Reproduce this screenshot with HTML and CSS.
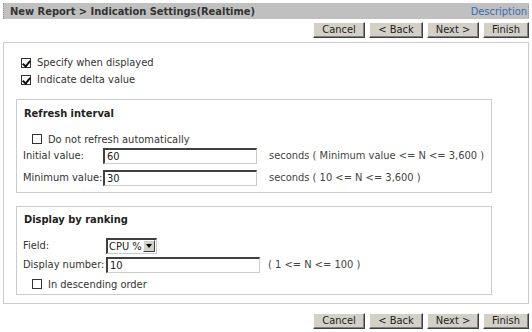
FILE: index.html
```html
<!DOCTYPE html>
<html lang="en">
<head>
  <meta charset="UTF-8">
  <title>New Report - Indication Settings</title>
  <link rel="stylesheet" href="styles.css">
</head>
<body>
  <div class="titlebar">
    <span class="title">New Report &gt; Indication Settings(Realtime)</span>
    <a class="desc-link" href="#">Description</a>
  </div>

  <div class="actions">
    <button class="btn btn-cancel">Cancel</button>
    <button class="btn btn-back">&lt; Back</button>
    <button class="btn btn-next">Next &gt;</button>
    <button class="btn btn-finish">Finish</button>
  </div>

  <div class="panel">
    <label class="check-row top-check">
      <span class="box checked"></span>Specify when displayed
    </label>
    <label class="check-row top-check">
      <span class="box checked"></span>Indicate delta value
    </label>

    <div class="group refresh">
      <div class="group-title">Refresh interval</div>
      <label class="check-row inner-check">
        <span class="box"></span>Do not refresh automatically
      </label>
      <div class="field-row">
        <span class="field-label">Initial value:</span>
        <input class="text-input" type="text" value="60">
        <span class="hint">seconds ( Minimum value &lt;= N &lt;= 3,600 )</span>
      </div>
      <div class="field-row">
        <span class="field-label">Minimum value:</span>
        <input class="text-input" type="text" value="30">
        <span class="hint">seconds ( 10 &lt;= N &lt;= 3,600 )</span>
      </div>
    </div>

    <div class="group ranking">
      <div class="group-title">Display by ranking</div>
      <div class="field-row">
        <span class="field-label">Field:</span>
        <span class="select">
          <span class="select-value">CPU %</span>
          <span class="select-arrow"></span>
        </span>
      </div>
      <div class="field-row">
        <span class="field-label">Display number:</span>
        <input class="text-input" type="text" value="10">
        <span class="hint">( 1 &lt;= N &lt;= 100 )</span>
      </div>
      <label class="check-row inner-check">
        <span class="box"></span>In descending order
      </label>
    </div>
  </div>

  <div class="actions bottom">
    <button class="btn btn-cancel">Cancel</button>
    <button class="btn btn-back">&lt; Back</button>
    <button class="btn btn-next">Next &gt;</button>
    <button class="btn btn-finish">Finish</button>
  </div>
</body>
</html>
```

FILE: styles.css
```css
* {
  margin: 0;
  padding: 0;
  box-sizing: border-box;
}

body {
  font-family: "DejaVu Sans Condensed", "DejaVu Sans", sans-serif;
  font-size: 11px;
  color: #333;
  background: #fff;
  width: 532px;
}

.titlebar {
  margin: 3px 3px 0 3px;
  height: 16px;
  background-color: #c0c0c0;
  border-left: 1px dotted #8a8ad0;
  display: flex;
  justify-content: space-between;
  align-items: center;
  padding-left: 6px;
}

.title {
  font-weight: bold;
  color: #333;
}

.desc-link {
  color: #3a6ab0;
  text-decoration: none;
  border-right: 1px dotted #8a8ad0;
  padding-right: 1px;
}

.actions {
  display: flex;
  justify-content: flex-end;
  gap: 4px;
  margin: 3px 3px 0 0;
}

.actions.bottom {
  margin-top: 9px;
}

.btn {
  height: 16px;
  font-family: inherit;
  font-size: 11px;
  line-height: 12px;
  color: #222;
  background-color: #d4d0c8;
  border: 1px solid;
  border-color: #fff #404040 #404040 #fff;
  box-shadow: inset -1px -1px 0 #808080;
}

.btn-cancel { width: 52px; }
.btn-back { width: 54px; }
.btn-next { width: 52px; }
.btn-finish { width: 46px; }

.panel {
  margin: 4px 3px 0 3px;
  border: 1px solid #ccc;
  height: 262px;
  padding-top: 11px;
}

.check-row {
  display: flex;
  align-items: center;
  height: 17px;
}

.top-check {
  padding-left: 17px;
}

.inner-check {
  padding-left: 9px;
  height: 16px;
}

.box {
  width: 10px;
  height: 10px;
  border: 1px solid #333;
  background: #fff;
  margin-right: 6px;
  position: relative;
}

.box.checked::after {
  content: "";
  position: absolute;
  left: 2px;
  top: 0px;
  width: 3px;
  height: 6px;
  border: solid #111;
  border-width: 0 2px 2px 0;
  transform: rotate(40deg);
}

.group {
  margin: 11px 0 0 12px;
  width: 476px;
  border: 1px solid #ccc;
  padding: 6px 0 6px 6px;
}

.group-title {
  font-weight: bold;
  color: #222;
  height: 16px;
  line-height: 16px;
  padding-left: 1px;
  margin-bottom: 9px;
}

.field-row {
  display: flex;
  align-items: center;
  height: 17px;
  margin-bottom: 5px;
}

.refresh .field-row:last-child {
  margin-bottom: 0;
}

.refresh .field-label {
  width: 80px;
}

.ranking {
  margin-top: 13px;
  padding: 5px 0 2px 6px;
}

.ranking .field-label {
  width: 83px;
}

.ranking .field-row {
  margin-bottom: 2px;
}

.ranking .inner-check {
  margin-top: 3px;
}

.text-input {
  width: 154px;
  height: 16px;
  font-family: inherit;
  font-size: 11px;
  color: #222;
  padding-left: 2px;
  border-style: solid;
  border-width: 2px 1px 1px 2px;
  border-color: #404040 #ccc #ccc #404040;
  outline: none;
}

.hint {
  margin-left: 12px;
  color: #444;
}

.ranking .hint {
  margin-left: 8px;
}

.select {
  display: flex;
  align-items: center;
  width: 51px;
  height: 16px;
  border-style: solid;
  border-width: 2px 1px 1px 2px;
  border-color: #404040 #ccc #ccc #404040;
  background: #fff;
}

.select-value {
  flex: 1;
  padding-left: 1px;
  color: #222;
}

.select-arrow {
  width: 12px;
  height: 12px;
  background: #d4d0c8;
  border: 1px solid;
  border-color: #fff #404040 #404040 #fff;
  position: relative;
  margin-right: 1px;
}

.select-arrow::after {
  content: "";
  position: absolute;
  left: 2px;
  top: 3px;
  border-left: 3px solid transparent;
  border-right: 3px solid transparent;
  border-top: 4px solid #000;
}
```
